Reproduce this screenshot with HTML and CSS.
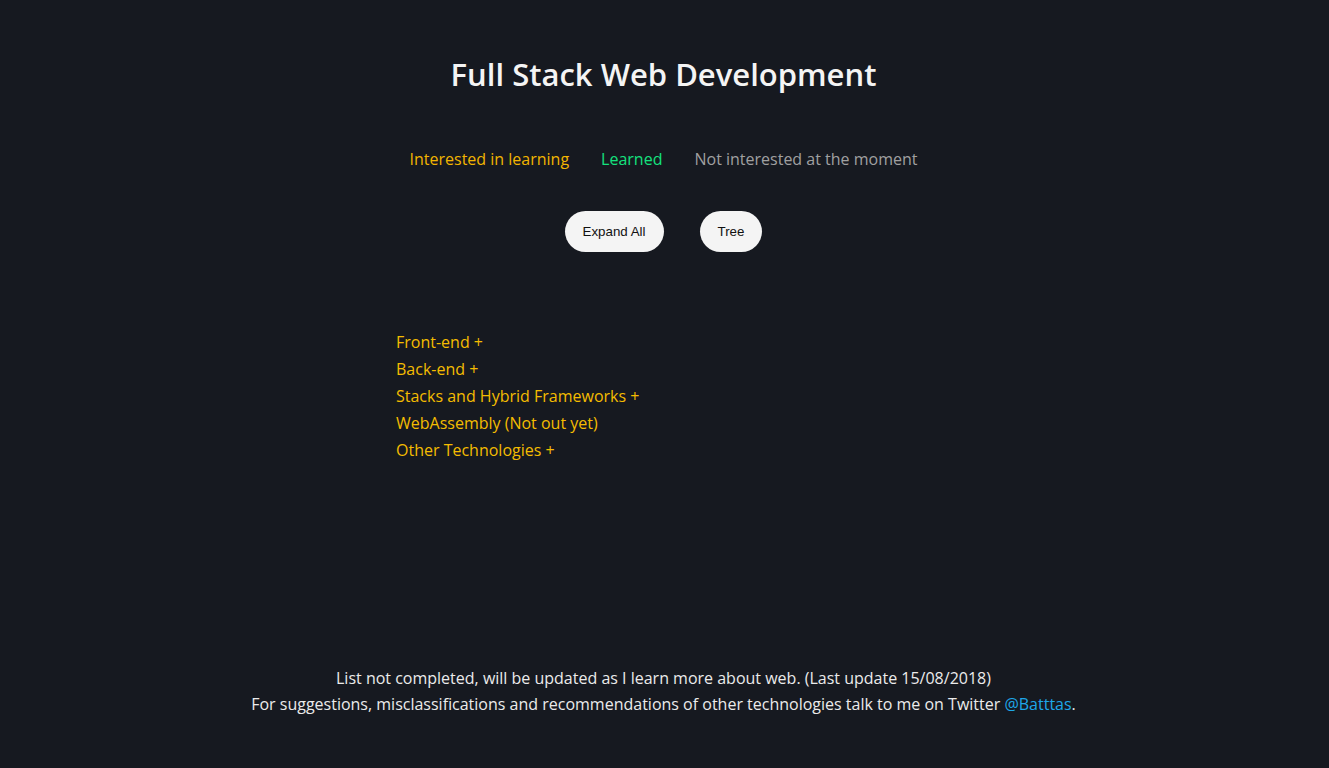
FILE: index.html
```html
<!DOCTYPE html>
<html>
<head>
<meta charset="utf-8">
<link rel="stylesheet" href="styles.css">
</head>
<body>
<div class="page">
  <h1 class="title">Full Stack Web Development</h1>
  <div class="legend">
    <span class="lg-learning">Interested in learning</span>
    <span class="lg-learned">Learned</span>
    <span class="lg-not">Not interested at the moment</span>
  </div>
  <div class="buttons">
    <button class="btn">Expand All</button>
    <button class="btn">Tree</button>
  </div>
  <ul class="tree">
    <li>Front-end +</li>
    <li>Back-end +</li>
    <li>Stacks and Hybrid Frameworks +</li>
    <li>WebAssembly (Not out yet)</li>
    <li>Other Technologies +</li>
  </ul>
  <footer class="footer">
    <p>List not completed, will be updated as I learn more about web. (Last update 15/08/2018)</p>
    <p>For suggestions, misclassifications and recommendations of other technologies talk to me on Twitter <a class="tw" href="#">@Batttas</a>.</p>
  </footer>
</div>
</body>
</html>
```
FILE: styles.css
```css
html, body {
  margin: 0;
  padding: 0;
  background: #161920;
  height: 100%;
}
body {
  font-family: "Open Sans", "Noto Sans", sans-serif;
  color: #f2f2f2;
}
.page {
  display: flex;
  flex-direction: column;
  align-items: center;
  min-height: 768px;
  padding-right: 2px;
  box-sizing: border-box;
}
.title {
  margin: 52px 0 0;
  font-size: 31px;
  font-weight: 600;
  line-height: 44px;
  color: #f4f4f4;
}
.legend {
  display: flex;
  gap: 32px;
  margin-top: 52px;
  font-size: 16px;
  line-height: 22px;
}
.lg-learning { color: #f2b500; }
.lg-learned { color: #14e27e; }
.lg-not { color: #a0a0a0; }
.buttons {
  display: flex;
  gap: 36px;
  margin-top: 41px;
}
.btn {
  height: 41px;
  padding: 0 18px;
  border: none;
  border-radius: 21px;
  background: #f4f4f4;
  color: #111;
  font-family: "Liberation Sans", Arial, sans-serif;
  font-size: 13.33px;
}
.tree {
  list-style: none;
  margin: 77px 0 0;
  padding: 0;
  align-self: flex-start;
  margin-left: 396px;
  font-size: 16px;
  line-height: 27px;
  color: #f4bc00;
}
.footer {
  margin-top: auto;
  margin-bottom: 51px;
  text-align: center;
  font-size: 16px;
  line-height: 26px;
  color: #ebebeb;
}
.footer p { margin: 0; }
.tw { color: #1ea7e8; text-decoration: none; }
```
